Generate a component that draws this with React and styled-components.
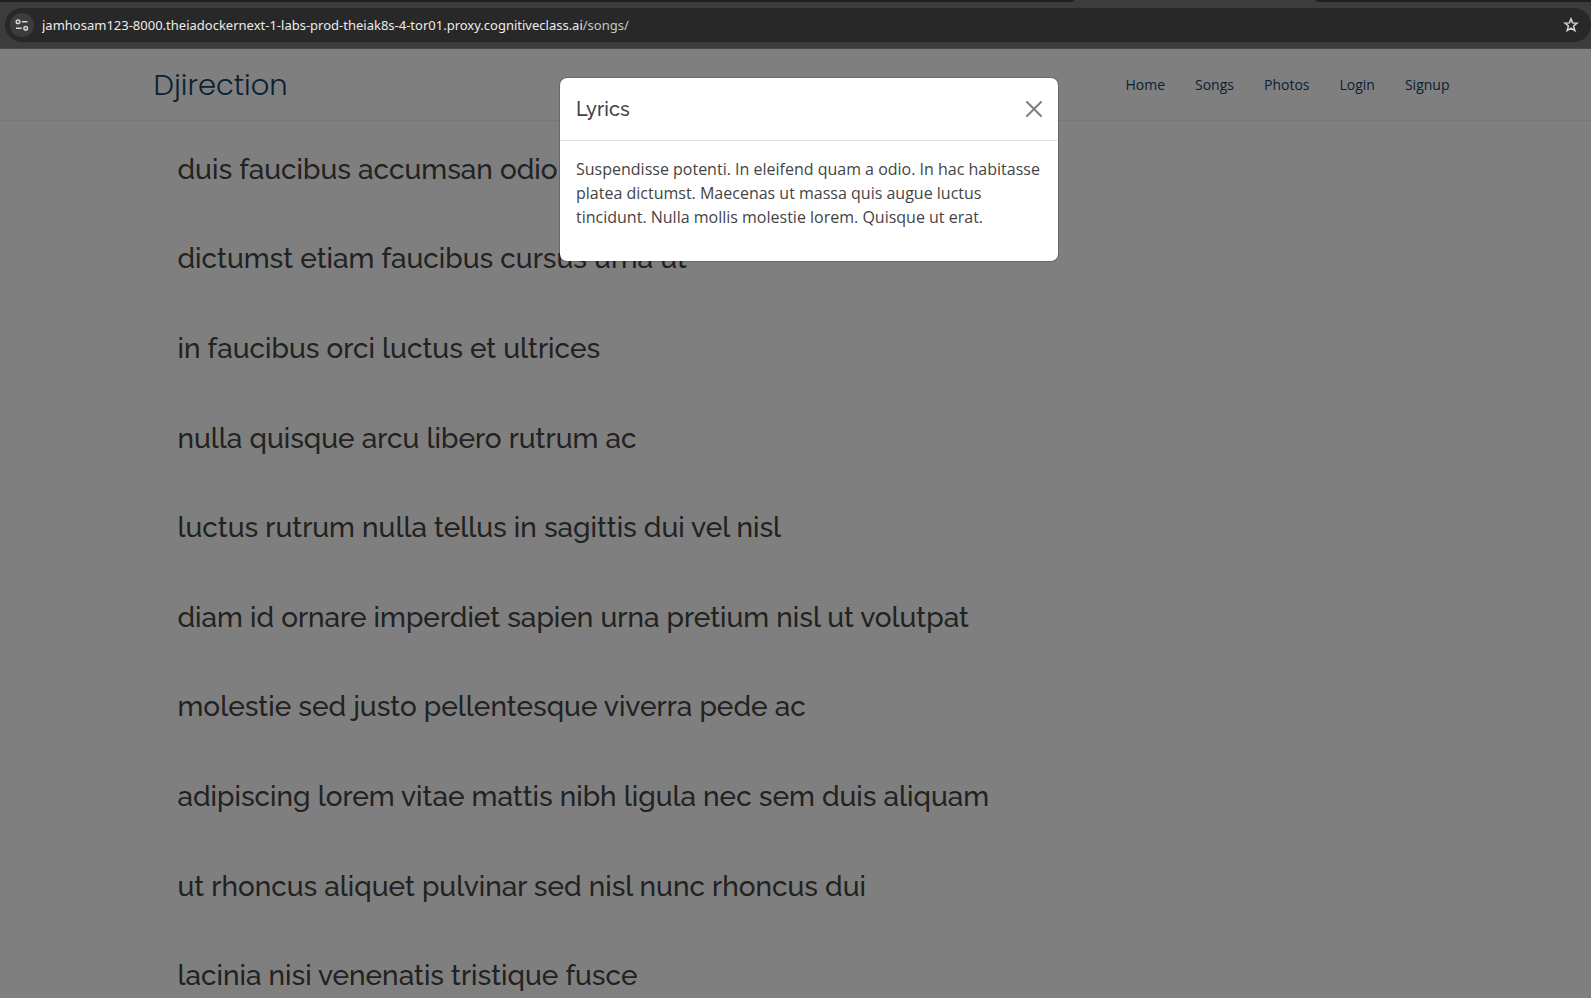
import React from "react";
import styled, { createGlobalStyle } from "styled-components";

const GlobalStyle = createGlobalStyle`
  *, *::before, *::after { box-sizing: border-box; }
  body {
    margin: 0;
    background: #ffffff;
    color: #444444;
    font-family: "Open Sans", "Noto Sans", sans-serif;
    font-size: 16px;
    line-height: 24px;
  }
`;

const Window = styled.div`
  display: flex;
  flex-direction: column;
  height: 100vh;
  overflow: hidden;
`;

const TabStrip = styled.div`
  display: flex;
  justify-content: space-between;
  height: 2px;
  flex: none;
  background: #3c3c3c;
`;

const InactiveTabs = styled.span`
  flex: ${(p) => p.$grow} 1 0;
  background: #202020;
  border-radius: ${(p) => (p.$side === "left" ? "0 0 6px 0" : "0 0 0 6px")};
`;

const ActiveTab = styled.span`
  flex: 242 1 0;
`;

const Toolbar = styled.div`
  flex: none;
  height: 47px;
  padding: 6px 0 6px 5px;
  background: #3c3c3c;
  border-bottom: 1px solid #4a4a4a;
`;

const AddressBar = styled.div`
  display: flex;
  align-items: center;
  height: 34px;
  padding: 0 8px 0 5px;
  border-radius: 17px;
  background: #282828;
  font-family: "Noto Sans", "Open Sans", sans-serif;
  font-size: 13px;
  line-height: 20px;
`;

const IconButton = styled.button`
  display: flex;
  align-items: center;
  justify-content: center;
  flex: none;
  width: 24px;
  height: 24px;
  padding: 0;
  border: 0;
  border-radius: 50%;
  background: ${(p) => (p.$filled ? "#3c3c3c" : "transparent")};
  color: #d6d6d6;
  cursor: pointer;
`;

const HostInput = styled.input`
  field-sizing: content;
  margin-left: 8px;
  padding: 0;
  border: 0;
  outline: 0;
  background: transparent;
  color: #ececec;
  font: inherit;
`;

const UrlPath = styled.span`
  flex: 1;
  color: #c7c7c7;
`;

const Viewport = styled.div`
  position: relative;
  flex: 1;
  min-height: 0;
  overflow: hidden;
`;

const Header = styled.header`
  padding-left: 12px;
  border-bottom: 1px solid #eaf1f7;
`;

const Container = styled.div`
  max-width: 1320px;
  margin: 0 auto;
  padding: 0 12px;
`;

const HeaderRow = styled(Container)`
  display: flex;
  align-items: center;
  justify-content: space-between;
  height: 71px;
`;

const Logo = styled.a`
  color: #124265;
  font-family: Poppins, Inter, sans-serif;
  font-size: 29px;
  font-weight: 300;
  line-height: 36px;
  text-decoration: none;
`;

const Nav = styled.nav`
  display: flex;
  gap: 30px;
`;

const NavLink = styled.a`
  color: #124265;
  font-size: 14px;
  line-height: 20px;
  text-decoration: none;
`;

const Main = styled.main`
  padding: 4px 0 0 12px;
`;

const SongList = styled.ul`
  display: grid;
  grid-auto-rows: 1fr;
  align-items: center;
  min-height: 896px;
  margin: 0;
  padding: 0 24px;
  list-style: none;
`;

const SongTitle = styled.h3`
  margin: 0;
  font-family: Raleway, Lato, sans-serif;
  font-size: 28px;
  font-weight: 500;
  line-height: 34px;
`;

const Backdrop = styled.div`
  position: absolute;
  inset: 0;
  padding: 28px 0 28px 27px;
  background: rgba(0, 0, 0, 0.5);
`;

const Dialog = styled.section`
  max-width: 500px;
  margin: 0 auto;
  border: 1px solid rgba(0, 0, 0, 0.18);
  border-radius: 8px;
  background: #ffffff;
  background-clip: padding-box;
`;

const DialogHeader = styled.div`
  display: flex;
  align-items: center;
  justify-content: space-between;
  height: 63px;
  padding: 0 12px 0 16px;
  border-bottom: 1px solid #dee2e6;
`;

const DialogTitle = styled.h5`
  margin: 0;
  font-family: Raleway, Lato, sans-serif;
  font-size: 20px;
  font-weight: 500;
  line-height: 30px;
`;

const CloseButton = styled(IconButton)`
  color: #7f7f7f;
`;

const DialogBody = styled.div`
  padding: 16px;
`;

const Lyrics = styled.p`
  margin: 0 0 16px;
`;

const links = ["Home", "Songs", "Photos", "Login", "Signup"];

const songs = [
  "duis faucibus accumsan odio",
  "dictumst etiam faucibus cursus urna ut",
  "in faucibus orci luctus et ultrices",
  "nulla quisque arcu libero rutrum ac",
  "luctus rutrum nulla tellus in sagittis dui vel nisl",
  "diam id ornare imperdiet sapien urna pretium nisl ut volutpat",
  "molestie sed justo pellentesque viverra pede ac",
  "adipiscing lorem vitae mattis nibh ligula nec sem duis aliquam",
  "ut rhoncus aliquet pulvinar sed nisl nunc rhoncus dui",
  "lacinia nisi venenatis tristique fusce",
];

const SiteInfoIcon = () => (
  <svg width="14" height="12" viewBox="0 0 14 12" fill="none" stroke="currentColor" strokeWidth="1.5" aria-hidden="true">
    <circle cx="3" cy="2.8" r="1.8" />
    <path d="M6.8 2.8H12.5M1 9.2H6.7" />
    <circle cx="10.7" cy="9.2" r="1.8" />
  </svg>
);

const StarIcon = () => (
  <svg width="16" height="16" viewBox="0 0 16 16" fill="none" stroke="currentColor" strokeWidth="1.5" aria-hidden="true">
    <path d="M8 1.9L9.6 5.9L14 6.2L10.6 9L11.8 13.6L8 11.1L4.2 13.6L5.4 9L2 6.2L6.4 5.9Z" />
  </svg>
);

const CloseIcon = () => (
  <svg width="16" height="16" viewBox="0 0 16 16" fill="none" stroke="currentColor" strokeWidth="2" strokeLinecap="round" aria-hidden="true">
    <path d="M1 1L15 15M15 1L1 15" />
  </svg>
);

export default function App() {
  return (
    <Window>
      <GlobalStyle />
      <TabStrip>
        <InactiveTabs $grow={1074} $side="left" />
        <ActiveTab />
        <InactiveTabs $grow={275} $side="right" />
      </TabStrip>
      <Toolbar>
        <AddressBar>
          <IconButton $filled type="button" aria-label="View site information">
            <SiteInfoIcon />
          </IconButton>
          <HostInput
            aria-label="Address"
            spellCheck={false}
            defaultValue="jamhosam123-8000.theiadockernext-1-labs-prod-theiak8s-4-tor01.proxy.cognitiveclass.ai"
          />
          <UrlPath>/songs/</UrlPath>
          <IconButton type="button" aria-label="Bookmark this tab">
            <StarIcon />
          </IconButton>
        </AddressBar>
      </Toolbar>
      <Viewport>
        <Header>
          <HeaderRow>
            <Logo href="#home">Djirection</Logo>
            <Nav>
              {links.map((label) => (
                <NavLink key={label} href={`#${label.toLowerCase()}`}>
                  {label}
                </NavLink>
              ))}
            </Nav>
          </HeaderRow>
        </Header>
        <Main>
          <Container>
            <SongList>
              {songs.map((title) => (
                <li key={title}>
                  <SongTitle>{title}</SongTitle>
                </li>
              ))}
            </SongList>
          </Container>
        </Main>
        <Backdrop>
          <Dialog role="dialog" aria-modal="true" aria-labelledby="lyrics-title">
            <DialogHeader>
              <DialogTitle id="lyrics-title">Lyrics</DialogTitle>
              <CloseButton type="button" aria-label="Close">
                <CloseIcon />
              </CloseButton>
            </DialogHeader>
            <DialogBody>
              <Lyrics>
                Suspendisse potenti. In eleifend quam a odio. In hac habitasse
                platea dictumst. Maecenas ut massa quis augue luctus tincidunt.
                Nulla mollis molestie lorem. Quisque ut erat.
              </Lyrics>
            </DialogBody>
          </Dialog>
        </Backdrop>
      </Viewport>
    </Window>
  );
}
